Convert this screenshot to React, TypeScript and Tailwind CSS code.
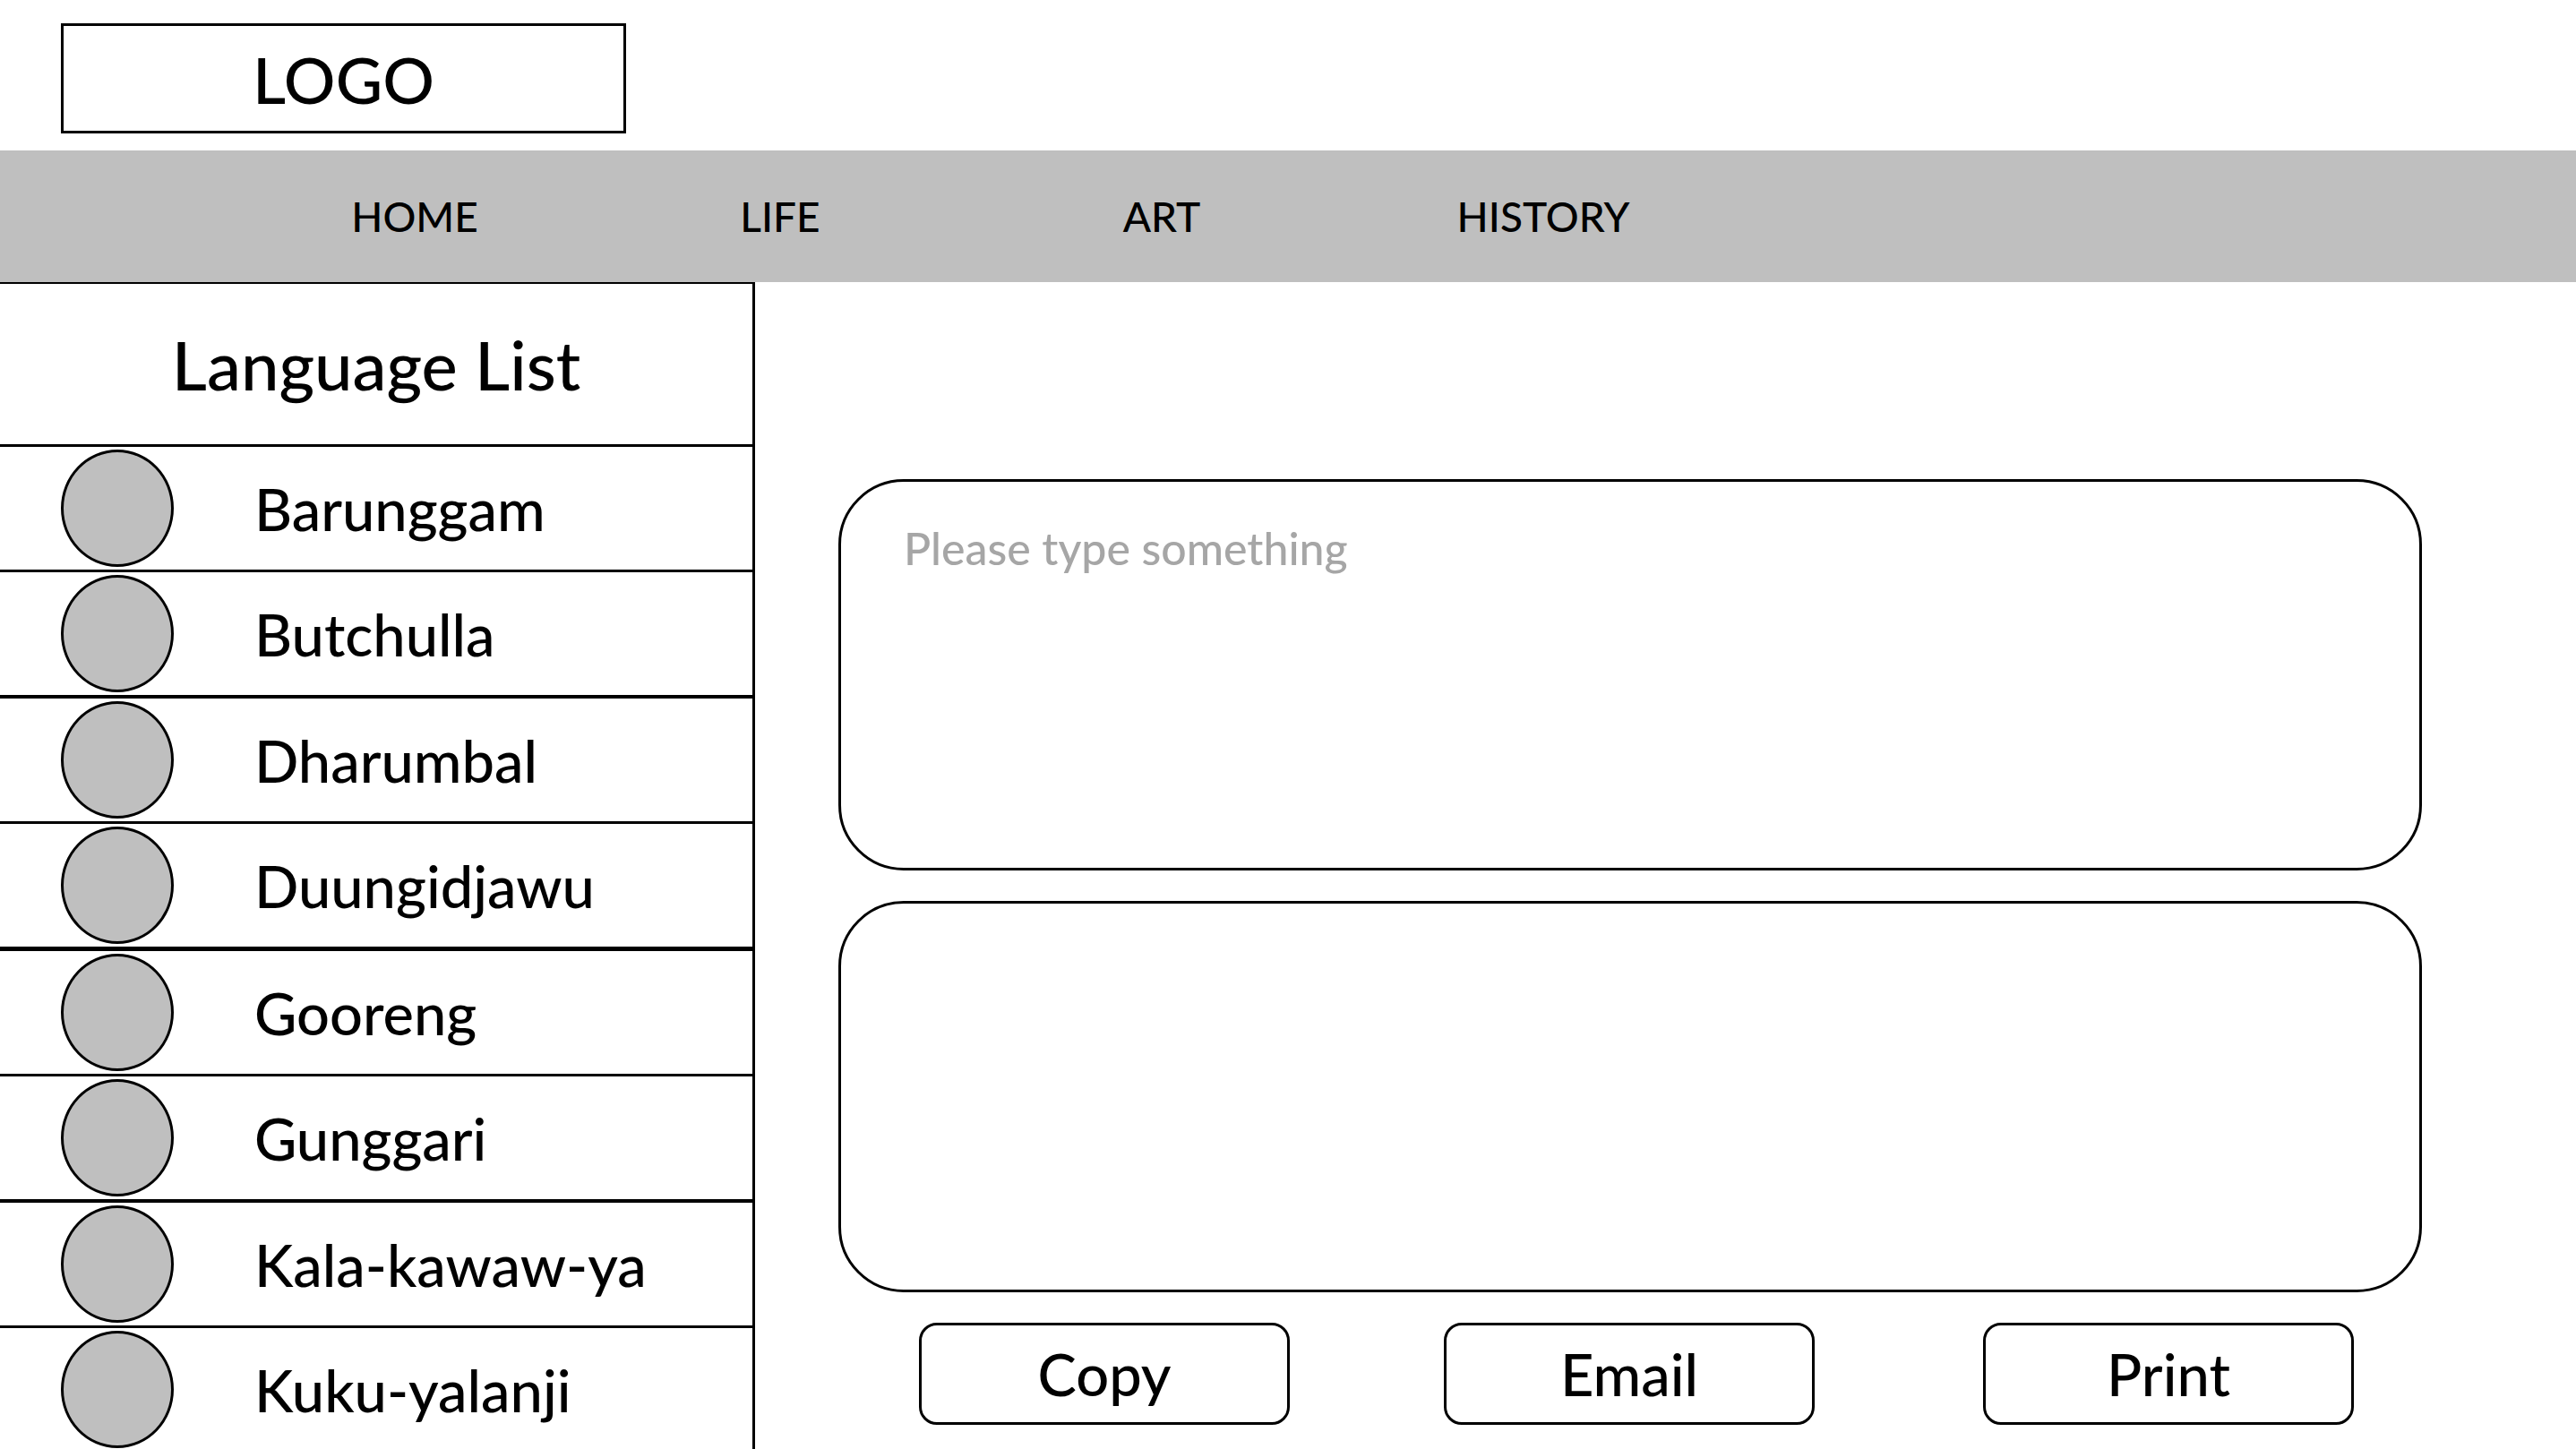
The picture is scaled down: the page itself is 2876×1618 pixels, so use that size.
const navItems = [
  { label: "HOME", width: "w-[390px]" },
  { label: "LIFE", width: "w-[426px]" },
  { label: "ART", width: "w-[426px]" },
  { label: "HISTORY", width: "w-[426px]" },
];

// Divider weights alternate down the list.
const languages = [
  { name: "Barunggam", divider: "border-b-3" },
  { name: "Butchulla", divider: "border-b-4" },
  { name: "Dharumbal", divider: "border-b-3" },
  { name: "Duungidjawu", divider: "border-b-5" },
  { name: "Gooreng", divider: "border-b-3" },
  { name: "Gunggari", divider: "border-b-4" },
  { name: "Kala-kawaw-ya", divider: "border-b-3" },
  { name: "Kuku-yalanji", divider: "border-b-0" },
];

const boxClass =
  "block h-[437px] w-full resize-none rounded-[73px] border-3 border-black bg-white px-[70px] py-[44px] text-[50px] leading-[60px] outline-none placeholder:text-[#a6a6a6]";

const buttonClass =
  "h-[114px] w-[414px] rounded-[20px] border-3 border-black bg-white text-[65px] leading-[80px]";

function Header() {
  return (
    <header>
      <div className="flex h-[168px] items-start px-[68px] pt-[26px]">
        <a
          href="#home"
          className="flex h-[123px] w-[631px] items-center justify-center border-3 border-black text-[72px] leading-[88px]"
        >
          LOGO
        </a>
      </div>
      <nav className="flex h-[147px] items-center bg-[#bfbfbf] pl-[268px] text-[46px] leading-[60px]">
        {navItems.map((item) => (
          <div key={item.label} className={`flex justify-center ${item.width}`}>
            <a href={`#${item.label.toLowerCase()}`}>{item.label}</a>
          </div>
        ))}
      </nav>
    </header>
  );
}

function Sidebar() {
  return (
    <aside className="w-[843px] shrink-0 overflow-hidden border-t-2 border-r-3 border-black">
      <h1 className="flex h-[182px] items-center justify-center border-b-3 border-black text-[76px] leading-[88px] font-medium">
        Language List
      </h1>
      <ul>
        {languages.map(({ name, divider }) => (
          <li key={name} className={`border-black ${divider}`}>
            <a
              href={`#${name.toLowerCase()}`}
              className="flex h-[137px] items-center gap-[90px] pl-[68px] text-[65px] leading-[80px]"
            >
              <span className="h-[131px] w-[126px] shrink-0 rounded-[50%] border-3 border-black bg-[#bfbfbf]" />
              {name}
            </a>
          </li>
        ))}
      </ul>
    </aside>
  );
}

export default function App() {
  return (
    <div className="flex h-screen flex-col overflow-hidden bg-white font-[Lato,sans-serif] font-medium text-black">
      <Header />
      <div className="flex min-h-0 flex-1">
        <Sidebar />
        <main className="flex min-w-0 flex-1 flex-col gap-[34px] pt-[220px] pr-[172px] pl-[93px]">
          <textarea aria-label="Text to translate" placeholder="Please type something" className={boxClass} />
          <textarea aria-label="Translation" readOnly className={boxClass} />
          <div className="flex gap-[172px] pr-[76px] pl-[90px]">
            <button type="button" className={buttonClass}>
              Copy
            </button>
            <button type="button" className={buttonClass}>
              Email
            </button>
            <button type="button" className={`ml-auto ${buttonClass}`}>
              Print
            </button>
          </div>
        </main>
      </div>
    </div>
  );
}
